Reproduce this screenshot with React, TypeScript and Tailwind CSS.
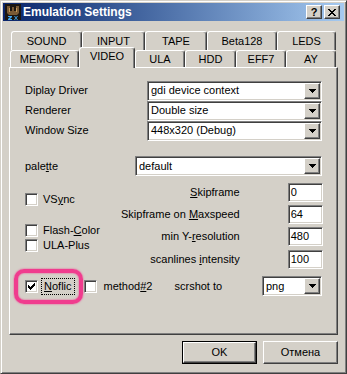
import React from "react";

const sunken =
  "border border-t-[#808080] border-l-[#808080] border-b-white border-r-white shadow-[inset_1px_1px_0_#404040,inset_-1px_-1px_0_#d4d0c8]";
const raised =
  "border border-t-white border-l-white border-b-[#404040] border-r-[#404040] shadow-[inset_-1px_-1px_0_#808080,inset_1px_1px_0_#d4d0c8]";

const Arrow = () => (
  <svg width="7" height="4" viewBox="0 0 7 4" shapeRendering="crispEdges">
    <path d="M0 0h7v1h-1v1h-1v1h-1v1h-1v-1h-1v-1h-1v-1h-1z" fill="#000" />
  </svg>
);

const Select = ({ value, className }: { value: string; className: string }) => (
  <div className={`h-[20px] bg-white flex items-center ${sunken} ${className}`}>
    <span className="flex-1 pl-[3px] whitespace-nowrap">{value}</span>
    <span className={`w-[16px] h-[16px] mr-px bg-[#d4d0c8] flex items-center justify-center ${raised}`}>
      <Arrow />
    </span>
  </div>
);

const Field = ({ value }: { value: string }) => (
  <div className={`w-[35px] h-[19px] shrink-0 bg-white flex items-center pl-[2px] ${sunken}`}>{value}</div>
);

const Check = ({ checked }: { checked?: boolean }) => (
  <span className={`w-[13px] h-[13px] shrink-0 bg-white flex items-center justify-center ${sunken}`}>
    {checked && (
      <svg width="7" height="7" viewBox="0 0 7 7" shapeRendering="crispEdges">
        <path d="M0 2h1v1h1v1h1v-1h1v-1h1v-1h1v-1h1v3h-1v1h-1v1h-1v1h-1v1h-1v-1h-1v-1h-1v-1h-1z" fill="#000" />
      </svg>
    )}
  </span>
);

const Tab = ({ label, w, h, selected }: { label: string; w: string; h: string; selected?: boolean }) => (
  <div
    className={`${w} ${h} shrink-0 bg-[#d4d0c8] border-t border-l border-r border-t-white border-l-white border-r-[#404040] shadow-[inset_-1px_0_0_#808080] rounded-t-[3px] flex items-center justify-center ${
      selected ? "relative z-10 -mb-px pb-[3px]" : ""
    }`}
  >
    {label}
  </div>
);

const TitleIcon = () => (
  <svg width="16" height="16" viewBox="0 0 16 16">
    <rect width="16" height="16" fill="#1c1610" />
    <path d="M2 2h3v5h2V3h2v4h2V2h3v7l-2 2H4L2 9z" fill="#7a5a34" />
    <path d="M4 4h1v4H4zM11 4h1v4h-1z" fill="#c49a5c" />
    <path d="M3 12h4v1l-2 2h2v1H3v-1l2-2H3zM9 12h1l1 1.5 1-1.5h1l-1.5 2 1.5 2h-1l-1-1.5-1 1.5H9l1.5-2z" fill="#3fa9f5" />
  </svg>
);

export default function App() {
  return (
    <div className="w-[347px] h-[374px] bg-[#d4d0c8] border border-t-[#d4d0c8] border-l-[#d4d0c8] border-b-[#404040] border-r-[#404040] shadow-[inset_1px_1px_0_#fff,inset_-1px_-1px_0_#808080] p-[2px] text-[11px] text-black font-['Liberation_Sans',Arial,sans-serif] leading-none select-none">
      {/* title bar */}
      <div className="h-[18px] flex items-center bg-gradient-to-r from-[#0a246a] to-[#a6caf0] pr-[4px]">
        <span className="ml-[2px]">
          <TitleIcon />
        </span>
        <span className="ml-[2px] text-white font-bold text-[12px] flex-1">Emulation Settings</span>
        <span className={`w-[16px] h-[14px] bg-[#d4d0c8] flex items-center justify-center font-bold text-[11px] ${raised}`}>?</span>
        <span className={`w-[16px] h-[14px] ml-[2px] bg-[#d4d0c8] flex items-center justify-center ${raised}`}>
          <svg width="8" height="7" viewBox="0 0 8 7" shapeRendering="crispEdges">
            <path d="M0 0h2v1h1v1h2v-1h1v-1h2v1h-1v1h-1v1h-1v1h1v1h1v1h1v1h-2v-1h-1v-1h-2v1h-1v1h-2v-1h1v-1h1v-1h1v-1h-1v-1h-1v-1h-1z" fill="#000" />
          </svg>
        </span>
      </div>

      <div className="px-[6px] pt-[10px]">
        {/* tabs */}
        <div className="flex ml-[2px] h-[19px]">
          <Tab label="SOUND" w="w-[71px]" h="h-[19px]" />
          <Tab label="INPUT" w="w-[63px]" h="h-[19px]" />
          <Tab label="TAPE" w="w-[62px]" h="h-[19px]" />
          <Tab label="Beta128" w="w-[70px]" h="h-[19px]" />
          <Tab label="LEDS" w="w-[59px]" h="h-[19px]" />
        </div>
        <div className="flex items-end ml-px h-[17px]">
          <Tab label="MEMORY" w="w-[69px]" h="h-[17px]" />
          <Tab label="VIDEO" w="w-[56px]" h="h-[21px]" selected />
          <Tab label="ULA" w="w-[50px]" h="h-[17px]" />
          <Tab label="HDD" w="w-[51px]" h="h-[17px]" />
          <Tab label="EFF7" w="w-[50px]" h="h-[17px]" />
          <Tab label="AY" w="w-[50px]" h="h-[17px]" />
        </div>

        {/* panel */}
        <div className="h-[268px] border border-t-white border-l-white border-b-[#404040] border-r-[#404040] shadow-[inset_-1px_-1px_0_#808080] pl-[15px] pr-[15px] pt-[13px]">
          <div className="flex items-center h-[19px] mb-px">
            <span className="flex-1">Diplay Driver</span>
            <Select value="gdi device context" className="w-[175px]" />
          </div>
          <div className="flex items-center h-[19px] mb-px">
            <span className="flex-1">Renderer</span>
            <Select value="Double size" className="w-[175px]" />
          </div>
          <div className="flex items-center h-[19px] mb-px">
            <span className="flex-1">Window Size</span>
            <Select value="448x320 (Debug)" className="w-[175px]" />
          </div>

          <div className="flex items-center h-[20px] mt-[16px]">
            <span className="flex-1">
              pale<u>t</u>te
            </span>
            <Select value="default" className="w-[187px]" />
          </div>

          <div className="flex mt-[7px]">
            <div className="w-[96px] shrink-0 pt-[10px]">
              <label className="flex items-center gap-[5px] h-[13px]">
                <Check />
                <span>
                  VS<u>y</u>nc
                </span>
              </label>
              <label className="flex items-center gap-[5px] h-[13px] mt-[18px]">
                <Check />
                <span>
                  Flash-<u>C</u>olor
                </span>
              </label>
              <label className="flex items-center gap-[5px] h-[13px] mt-[2px]">
                <Check />
                <span>ULA-Plus</span>
              </label>
            </div>
            <div className="flex-1 flex flex-col gap-[3px] pr-px whitespace-nowrap">
              <div className="flex items-center justify-end h-[19px]">
                <span className="mr-[48px]">
                  <u>S</u>kipframe
                </span>
                <Field value="0" />
              </div>
              <div className="flex items-center justify-end h-[19px]">
                <span className="mr-[48px]">
                  Skipframe on <u>M</u>axspeed
                </span>
                <Field value="64" />
              </div>
              <div className="flex items-center justify-end h-[19px]">
                <span className="mr-[48px]">
                  min Y-<u>r</u>esolution
                </span>
                <Field value="480" />
              </div>
              <div className="flex items-center justify-end h-[19px] mt-px">
                <span className="mr-[48px]">
                  scanlines <u>i</u>ntensity
                </span>
                <Field value="100" />
              </div>
            </div>
          </div>

          <div className="relative flex items-center h-[20px] mt-[7px]">
            <Check checked />
            <span className="ml-[3px] px-[2px] py-[2px] border border-dotted border-black">
              <u>N</u>oflic
            </span>
            <span className="ml-[9px]">
              <Check />
            </span>
            <span className="ml-[7px]">
              method<u>#</u>2
            </span>
            <span className="ml-[22px] flex-1">scrshot to</span>
            <Select value="png" className="w-[60px]" />
            <div className="absolute -left-[11px] -top-[7px] w-[69px] h-[35px] rounded-[10px] border-[4px] border-[#f03c8e] shadow-[0_0_2px_#f03c8e,inset_0_0_2px_#f03c8e] pointer-events-none" />
          </div>
        </div>

        {/* buttons */}
        <div className="flex justify-end gap-[6px] mt-[6px]">
          <div className="w-[75px] h-[23px] border border-black">
            <div className={`w-full h-full flex items-center justify-center ${raised}`}>OK</div>
          </div>
          <div className={`w-[75px] h-[23px] flex items-center justify-center ${raised}`}>Отмена</div>
        </div>
      </div>
    </div>
  );
}
